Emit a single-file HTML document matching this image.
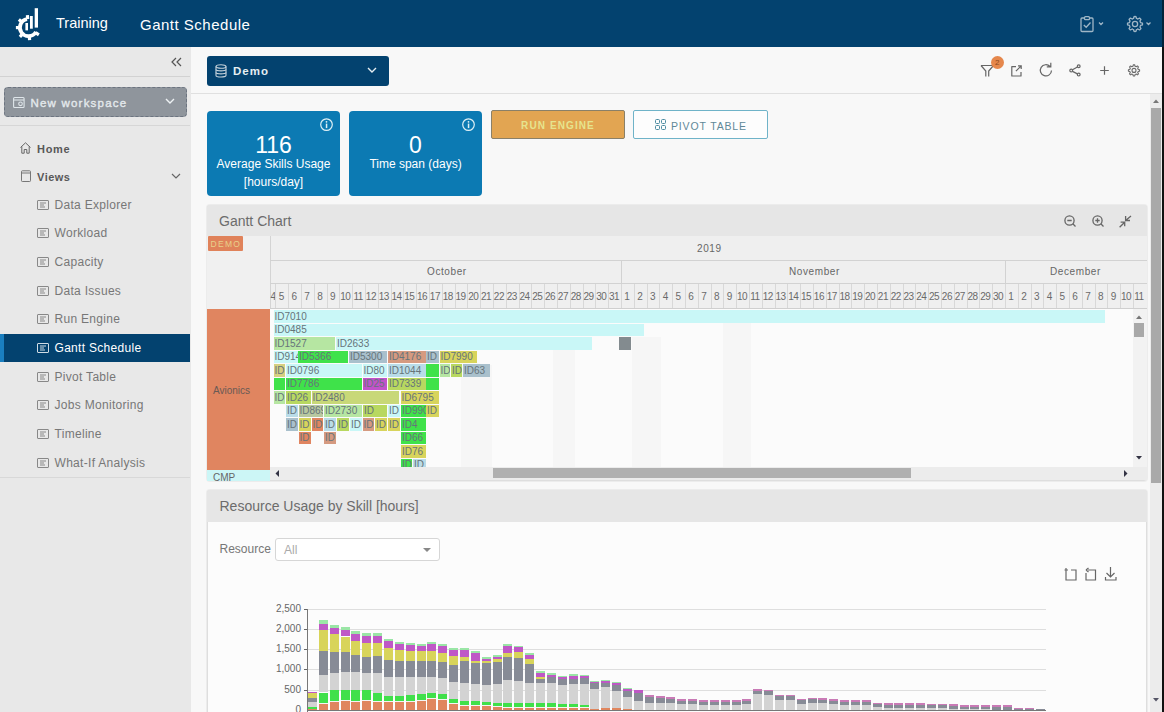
<!DOCTYPE html><html><head><meta charset="utf-8"><style>
*{box-sizing:border-box;margin:0;padding:0}
html,body{width:1164px;height:712px;overflow:hidden;background:#f8f8f8;font-family:"Liberation Sans",sans-serif;position:relative}
.abs{position:absolute}
.t{position:absolute;white-space:nowrap;line-height:1}
svg{position:absolute;overflow:visible}
</style></head><body>

<div class="abs" style="left:0;top:0;width:1164px;height:47px;background:#03426f"></div>
<svg style="left:0;top:0" width="60" height="47" viewBox="0 0 60 47"><path d="M27.01 19.13 A8.6 8.6 0 1 0 35.95 31.90" fill="none" stroke="#fff" stroke-width="3.8"/><rect x="26.90" y="15.00" width="3.2" height="4" fill="#fff" transform="rotate(-5 28.5 27.6)"/><rect x="26.90" y="15.00" width="3.2" height="4" fill="#fff" transform="rotate(-50 28.5 27.6)"/><rect x="26.90" y="15.00" width="3.2" height="4" fill="#fff" transform="rotate(270 28.5 27.6)"/><rect x="26.90" y="15.00" width="3.2" height="4" fill="#fff" transform="rotate(223 28.5 27.6)"/><rect x="26.90" y="15.00" width="3.2" height="4" fill="#fff" transform="rotate(175 28.5 27.6)"/><rect x="26.90" y="15.00" width="3.2" height="4" fill="#fff" transform="rotate(125 28.5 27.6)"/><rect x="25.4" y="23" width="2.6" height="7.4" fill="#fff"/><rect x="30" y="16" width="2.8" height="12.7" fill="#fff"/><rect x="34.7" y="8.2" width="3.3" height="19.4" fill="#fff"/></svg>
<div class="t" style="left:56px;top:16px;font-size:14.5px;color:#fff">Training</div>
<div class="t" style="left:140px;top:16.5px;font-size:15px;letter-spacing:0.5px;color:#fff">Gantt Schedule</div>
<svg style="left:1080px;top:16px" width="80" height="16" viewBox="0 0 80 16">
<g fill="none" stroke="#9fb6c6" stroke-width="1.3">
<rect x="1" y="2" width="12" height="13.5" rx="1"/>
<rect x="4.5" y="0.7" width="5" height="3" rx="1" fill="#03426f"/>
<path d="M3.8 9 L6.2 11.3 L10.5 6.5"/>
<path d="M19 6.5 L21 8.5 L23 6.5"/>
<path d="M66.5 6.5 L68.5 8.5 L70.5 6.5"/>
</g></svg>
<svg style="left:1120px;top:10px" width="40" height="30" viewBox="0 0 40 30"><path d="M22.50 14.00 L22.44 14.98 L20.51 15.48 L20.27 16.18 L19.94 16.85 L20.95 18.57 L20.30 19.30 L19.57 19.95 L17.85 18.94 L17.18 19.27 L16.48 19.51 L15.98 21.44 L15.00 21.50 L14.02 21.44 L13.52 19.51 L12.82 19.27 L12.15 18.94 L10.43 19.95 L9.70 19.30 L9.05 18.57 L10.06 16.85 L9.73 16.18 L9.49 15.48 L7.56 14.98 L7.50 14.00 L7.56 13.02 L9.49 12.52 L9.73 11.82 L10.06 11.15 L9.05 9.43 L9.70 8.70 L10.43 8.05 L12.15 9.06 L12.82 8.73 L13.52 8.49 L14.02 6.56 L15.00 6.50 L15.98 6.56 L16.48 8.49 L17.18 8.73 L17.85 9.06 L19.57 8.05 L20.30 8.70 L20.95 9.43 L19.94 11.15 L20.27 11.82 L20.51 12.52 L22.44 13.02 Z" fill="none" stroke="#9fb6c6" stroke-width="1.3" stroke-linejoin="round"/><circle cx="15" cy="14" r="2.6" fill="none" stroke="#9fb6c6" stroke-width="1.3"/></svg>
<div class="abs" style="left:0;top:47px;width:191px;height:665px;background:#e8e8e8"></div>
<svg style="left:171px;top:57px" width="12" height="10" viewBox="0 0 12 10"><g fill="none" stroke="#555" stroke-width="1.2"><path d="M5 1 L1 5 L5 9"/><path d="M10 1 L6 5 L10 9"/></g></svg>
<div class="abs" style="left:0;top:76px;width:190px;height:1px;background:#d2d2d2"></div>
<div class="abs" style="left:4px;top:87px;width:183px;height:30px;background:#8f959c;border:1px dashed #6c7480;border-radius:4px"></div>
<svg style="left:13px;top:96px" width="12" height="12" viewBox="0 0 12 12"><g fill="none" stroke="#dfe6ea" stroke-width="1.1"><rect x="0.6" y="1.5" width="10.5" height="10" rx="1"/><path d="M0.6 4 H11"/><circle cx="7.5" cy="7.8" r="1.8"/></g></svg>
<div class="t" style="left:30.5px;top:97.8px;font-size:11.5px;color:#e4e9ec;-webkit-text-stroke:0.35px #e4e9ec;letter-spacing:1.2px">New workspace</div>
<svg style="left:165px;top:98px" width="10" height="7" viewBox="0 0 10 7"><path d="M1 1 L5 5 L9 1" fill="none" stroke="#eef2f4" stroke-width="1.4"/></svg>
<div class="abs" style="left:0;top:125px;width:190px;height:1px;background:#d6d6d6"></div>
<svg style="left:20px;top:142px" width="11" height="12" viewBox="0 0 11 12"><g fill="none" stroke="#666" stroke-width="1"><path d="M0.5 5.5 L5.5 0.8 L10.5 5.5"/><path d="M1.8 4.5 V11.2 H4.2 V7.5 H6.8 V11.2 H9.2 V4.5"/></g></svg>
<div class="t" style="left:37px;top:143.5px;font-size:11px;color:#585858;font-weight:bold;letter-spacing:0.7px">Home</div>
<svg style="left:21px;top:170px" width="10" height="12" viewBox="0 0 10 12"><g fill="none" stroke="#777" stroke-width="1"><rect x="0.5" y="0.8" width="9" height="10.7" rx="0.8"/><path d="M0.5 3 H9.5"/></g></svg>
<div class="t" style="left:37px;top:172px;font-size:11px;color:#585858;font-weight:bold;letter-spacing:0.5px">Views</div>
<svg style="left:171px;top:173px" width="10" height="7" viewBox="0 0 10 7"><path d="M1 1 L5 5 L9 1" fill="none" stroke="#666" stroke-width="1.2"/></svg>
<svg style="left:37px;top:199.5px" width="12" height="10" viewBox="0 0 12 10"><g fill="none" stroke="#888" stroke-width="1"><rect x="0.5" y="0.5" width="11" height="9" rx="0.5"/><path d="M3 3 H9 M3 5 H7 M3 7 H8"/></g></svg>
<div class="t" style="left:54.5px;top:198.5px;font-size:12px;letter-spacing:0.3px;color:#777">Data Explorer</div>
<svg style="left:37px;top:228.2px" width="12" height="10" viewBox="0 0 12 10"><g fill="none" stroke="#888" stroke-width="1"><rect x="0.5" y="0.5" width="11" height="9" rx="0.5"/><path d="M3 3 H9 M3 5 H7 M3 7 H8"/></g></svg>
<div class="t" style="left:54.5px;top:227.2px;font-size:12px;letter-spacing:0.3px;color:#777">Workload</div>
<svg style="left:37px;top:256.9px" width="12" height="10" viewBox="0 0 12 10"><g fill="none" stroke="#888" stroke-width="1"><rect x="0.5" y="0.5" width="11" height="9" rx="0.5"/><path d="M3 3 H9 M3 5 H7 M3 7 H8"/></g></svg>
<div class="t" style="left:54.5px;top:255.9px;font-size:12px;letter-spacing:0.3px;color:#777">Capacity</div>
<svg style="left:37px;top:285.6px" width="12" height="10" viewBox="0 0 12 10"><g fill="none" stroke="#888" stroke-width="1"><rect x="0.5" y="0.5" width="11" height="9" rx="0.5"/><path d="M3 3 H9 M3 5 H7 M3 7 H8"/></g></svg>
<div class="t" style="left:54.5px;top:284.6px;font-size:12px;letter-spacing:0.3px;color:#777">Data Issues</div>
<svg style="left:37px;top:314.3px" width="12" height="10" viewBox="0 0 12 10"><g fill="none" stroke="#888" stroke-width="1"><rect x="0.5" y="0.5" width="11" height="9" rx="0.5"/><path d="M3 3 H9 M3 5 H7 M3 7 H8"/></g></svg>
<div class="t" style="left:54.5px;top:313.3px;font-size:12px;letter-spacing:0.3px;color:#777">Run Engine</div>
<div class="abs" style="left:0;top:334px;width:190px;height:28px;background:#03426f"></div>
<div class="abs" style="left:0;top:334px;width:4px;height:28px;background:#1a7fc0"></div>
<svg style="left:37px;top:343.0px" width="12" height="10" viewBox="0 0 12 10"><g fill="none" stroke="#cfdbe4" stroke-width="1"><rect x="0.5" y="0.5" width="11" height="9" rx="0.5"/><path d="M3 3 H9 M3 5 H7 M3 7 H8"/></g></svg>
<div class="t" style="left:54.5px;top:342.0px;font-size:12px;letter-spacing:0.3px;color:#fff">Gantt Schedule</div>
<svg style="left:37px;top:371.7px" width="12" height="10" viewBox="0 0 12 10"><g fill="none" stroke="#888" stroke-width="1"><rect x="0.5" y="0.5" width="11" height="9" rx="0.5"/><path d="M3 3 H9 M3 5 H7 M3 7 H8"/></g></svg>
<div class="t" style="left:54.5px;top:370.7px;font-size:12px;letter-spacing:0.3px;color:#777">Pivot Table</div>
<svg style="left:37px;top:400.4px" width="12" height="10" viewBox="0 0 12 10"><g fill="none" stroke="#888" stroke-width="1"><rect x="0.5" y="0.5" width="11" height="9" rx="0.5"/><path d="M3 3 H9 M3 5 H7 M3 7 H8"/></g></svg>
<div class="t" style="left:54.5px;top:399.4px;font-size:12px;letter-spacing:0.3px;color:#777">Jobs Monitoring</div>
<svg style="left:37px;top:429.1px" width="12" height="10" viewBox="0 0 12 10"><g fill="none" stroke="#888" stroke-width="1"><rect x="0.5" y="0.5" width="11" height="9" rx="0.5"/><path d="M3 3 H9 M3 5 H7 M3 7 H8"/></g></svg>
<div class="t" style="left:54.5px;top:428.1px;font-size:12px;letter-spacing:0.3px;color:#777">Timeline</div>
<svg style="left:37px;top:457.8px" width="12" height="10" viewBox="0 0 12 10"><g fill="none" stroke="#888" stroke-width="1"><rect x="0.5" y="0.5" width="11" height="9" rx="0.5"/><path d="M3 3 H9 M3 5 H7 M3 7 H8"/></g></svg>
<div class="t" style="left:54.5px;top:456.8px;font-size:12px;letter-spacing:0.3px;color:#777">What-If Analysis</div>
<div class="abs" style="left:0;top:477px;width:190px;height:1px;background:#d8d8d8"></div>
<div class="abs" style="left:191px;top:47px;width:971px;height:47px;background:#f8f8f8"></div>
<div class="abs" style="left:191px;top:93px;width:971px;height:1px;background:#e0e0e0"></div>
<div class="abs" style="left:207px;top:56px;width:182px;height:30px;background:#03426f;border-radius:3px"></div>
<svg style="left:215px;top:64px" width="12" height="14" viewBox="0 0 12 14"><g fill="none" stroke="#c8d4dc" stroke-width="1.1"><ellipse cx="6" cy="2.5" rx="5" ry="1.8"/><path d="M1 2.5 V11.5 C1 13.5 11 13.5 11 11.5 V2.5"/><path d="M1 5.5 C1 7.3 11 7.3 11 5.5 M1 8.5 C1 10.3 11 10.3 11 8.5"/></g></svg>
<div class="t" style="left:233px;top:66px;font-size:11.5px;color:#e6eef2;font-weight:bold;letter-spacing:1px">Demo</div>
<svg style="left:367px;top:67px" width="10" height="7" viewBox="0 0 10 7"><path d="M1 1 L5 5 L9 1" fill="none" stroke="#e6eef2" stroke-width="1.4"/></svg>
<svg style="left:975px;top:52px" width="175" height="30" viewBox="0 0 175 30"><g fill="none" stroke="#666" stroke-width="1.2">
<path d="M6 13.5 H18.5 L13.7 19 V24.5 M10.8 24.5 V19 L6 13.5"/>
<path d="M41 14.6 H36.8 V24 H46 V20" stroke-linejoin="round"/><path d="M40.9 19.2 L46.2 13.8 M43 13.8 H46.2 V17"/>
<path d="M75 14.5 A5.6 5.6 0 1 0 76.5 18.5 M75.8 10.8 V14.8 H71.8"/>
<circle cx="96.2" cy="18.6" r="1.4"/><circle cx="103.7" cy="14.3" r="1.4"/><circle cx="103.7" cy="22.6" r="1.4"/><path d="M97.5 17.8 L102.4 15 M97.5 19.4 L102.4 21.9"/>
<path d="M129.5 14.2 V22.8 M125.2 18.5 H133.8"/>
</g></svg>
<svg style="left:1120px;top:52px" width="30" height="30" viewBox="0 0 30 30"><path d="M19.60 18.40 L19.55 19.13 L18.11 19.50 L17.93 20.03 L17.69 20.53 L18.44 21.81 L17.96 22.36 L17.41 22.84 L16.13 22.09 L15.63 22.33 L15.10 22.51 L14.73 23.95 L14.00 24.00 L13.27 23.95 L12.90 22.51 L12.37 22.33 L11.87 22.09 L10.59 22.84 L10.04 22.36 L9.56 21.81 L10.31 20.53 L10.07 20.03 L9.89 19.50 L8.45 19.13 L8.40 18.40 L8.45 17.67 L9.89 17.30 L10.07 16.77 L10.31 16.27 L9.56 14.99 L10.04 14.44 L10.59 13.96 L11.87 14.71 L12.37 14.47 L12.90 14.29 L13.27 12.85 L14.00 12.80 L14.73 12.85 L15.10 14.29 L15.63 14.47 L16.13 14.71 L17.41 13.96 L17.96 14.44 L18.44 14.99 L17.69 16.27 L17.93 16.77 L18.11 17.30 L19.55 17.67 Z" fill="none" stroke="#6a6a6a" stroke-width="1.1" stroke-linejoin="round"/><circle cx="14" cy="18.4" r="2" fill="none" stroke="#6a6a6a" stroke-width="1.1"/></svg>
<div class="abs" style="left:991px;top:56px;width:13px;height:13px;border-radius:50%;background:#e5874c"></div>
<div class="t" style="left:995px;top:58.5px;font-size:8px;color:#8a4a20">2</div>
<div class="abs" style="left:1150px;top:94px;width:12px;height:618px;background:#ececec"></div>
<div class="abs" style="left:1151px;top:108px;width:10px;height:375px;background:#a9a9a9"></div>
<svg style="left:1152px;top:98px" width="8" height="6" viewBox="0 0 8 6"><path d="M1 5 L4 1.5 L7 5 Z" fill="#777"/></svg>
<svg style="left:1152px;top:697px" width="8" height="6" viewBox="0 0 8 6"><path d="M1 1 L4 4.5 L7 1 Z" fill="#556"/></svg>
<div class="abs" style="left:1162px;top:0;width:2px;height:47px;background:#02233a"></div>
<div class="abs" style="left:1162px;top:47px;width:2px;height:665px;background:#111"></div>
<div class="abs" style="left:207px;top:111px;width:133px;height:85px;background:#0c7ab3;border-radius:4px"></div>
<div class="t" style="left:207px;width:133px;text-align:center;top:134px;font-size:23px;color:#fff">116</div>
<div class="t" style="left:207px;width:133px;text-align:center;top:158px;font-size:12px;color:#fff">Average Skills Usage</div>
<div class="t" style="left:207px;width:133px;text-align:center;top:176px;font-size:12px;color:#fff">[hours/day]</div>
<svg style="left:320px;top:118px" width="14" height="14" viewBox="0 0 14 14"><circle cx="6.5" cy="6.6" r="5.8" fill="none" stroke="#dff0f5" stroke-width="1.2"/><rect x="5.8" y="5.6" width="1.5" height="4.5" fill="#dff0f5"/><circle cx="6.5" cy="3.8" r="0.9" fill="#dff0f5"/></svg>
<div class="abs" style="left:349px;top:111px;width:133px;height:85px;background:#0c7ab3;border-radius:4px"></div>
<div class="t" style="left:349px;width:133px;text-align:center;top:134px;font-size:23px;color:#fff">0</div>
<div class="t" style="left:349px;width:133px;text-align:center;top:158px;font-size:12px;color:#fff">Time span (days)</div>
<svg style="left:462px;top:118px" width="14" height="14" viewBox="0 0 14 14"><circle cx="6.5" cy="6.6" r="5.8" fill="none" stroke="#dff0f5" stroke-width="1.2"/><rect x="5.8" y="5.6" width="1.5" height="4.5" fill="#dff0f5"/><circle cx="6.5" cy="3.8" r="0.9" fill="#dff0f5"/></svg>
<div class="abs" style="left:491px;top:110px;width:134px;height:29px;background:#e2a552;border:1px solid #8a8068;border-radius:2px"></div>
<div class="t" style="left:491px;width:134px;text-align:center;top:120.5px;font-size:10px;font-weight:bold;color:#e6e48e;letter-spacing:1.1px">RUN ENGINE</div>
<div class="abs" style="left:633px;top:110px;width:135px;height:29px;background:#fdfdfd;border:1px solid #6fb3c8;border-radius:2px"></div>
<svg style="left:655px;top:119px" width="11" height="11" viewBox="0 0 11 11"><g fill="none" stroke="#4a8aa0" stroke-width="1"><rect x="0.5" y="0.5" width="4" height="4" rx="1"/><rect x="6.5" y="0.5" width="4" height="4" rx="1"/><rect x="0.5" y="6.5" width="4" height="4" rx="1"/><rect x="6.5" y="6.5" width="4" height="4" rx="1"/></g></svg>
<div class="t" style="left:671px;top:120.5px;font-size:10.5px;color:#5f8898;letter-spacing:0.85px">PIVOT TABLE</div>
<div class="abs" style="left:207px;top:205px;width:940px;height:276px;background:#f9f9f9;border:1px solid #dedede;box-shadow:0 0 0 1px #ececec;border-radius:3px"></div>
<div class="abs" style="left:207px;top:205px;width:940px;height:31px;background:#e6e6e6;border-radius:3px 3px 0 0"></div>
<div class="t" style="left:219px;top:213.5px;font-size:14px;color:#6c6c6c">Gantt Chart</div>
<svg style="left:1060px;top:210px" width="80" height="22" viewBox="0 0 80 22"><g fill="none" stroke="#666" stroke-width="1.3">
<circle cx="9.5" cy="10.5" r="4.6"/><path d="M12.8 13.8 L15.5 16.5 M7.3 10.5 H11.7"/>
<circle cx="37.5" cy="10.5" r="4.6"/><path d="M40.8 13.8 L43.5 16.5 M35.3 10.5 H39.7 M37.5 8.3 V12.7"/>
<path d="M59.6 17.3 L64.7 12.2 M60.6 12.2 H64.7 V16.3 M71 6 L65.6 10.5 M65.6 5.9 V10.5 H70"/>
</g></svg>
<div class="abs" style="left:207px;top:236px;width:63px;height:73px;background:#f0f0f0"></div>
<div class="abs" style="left:208px;top:236px;width:35px;height:15px;background:#e0825a;border-radius:1px"></div>
<div class="t" style="left:210.5px;top:239.5px;font-size:8.5px;letter-spacing:1.3px;color:#e8d08a">DEMO</div>
<div class="abs" style="left:270px;top:236px;width:877px;height:73px;background:#efefef;border-left:1px solid #d4d4d4"></div>
<div class="abs" style="left:270px;top:260px;width:877px;height:1px;background:#d2d2d2"></div>
<div class="abs" style="left:270px;top:283px;width:877px;height:1px;background:#d2d2d2"></div>
<div class="abs" style="left:270px;top:308px;width:877px;height:1px;background:#cfcfcf"></div>
<div class="t" style="left:697px;top:243.5px;font-size:10px;letter-spacing:0.6px;color:#666">2019</div>
<div class="abs" style="left:620.5px;top:261px;width:1px;height:23px;background:#d2d2d2"></div>
<div class="abs" style="left:1004.5px;top:261px;width:1px;height:23px;background:#d2d2d2"></div>
<div class="t" style="left:427px;top:267px;font-size:10px;letter-spacing:0.6px;color:#666">October</div>
<div class="t" style="left:789px;top:267px;font-size:10px;letter-spacing:0.6px;color:#666">November</div>
<div class="t" style="left:1050px;top:267px;font-size:10px;letter-spacing:0.6px;color:#666">December</div>
<div class="abs" style="left:270px;top:284px;width:877px;height:24px;overflow:hidden">
<div class="abs" style="left:-7.40px;top:0;width:1px;height:24px;background:#d8d8d8"></div>
<div class="t" style="left:-3.30px;width:12.8px;text-align:center;top:8.2px;font-size:10px;letter-spacing:-0.5px;color:#6a6a6a">4</div>
<div class="abs" style="left:5.40px;top:0;width:1px;height:24px;background:#d8d8d8"></div>
<div class="t" style="left:4.90px;width:12.8px;text-align:center;top:8.2px;font-size:10px;letter-spacing:-0.5px;color:#6a6a6a">5</div>
<div class="abs" style="left:18.20px;top:0;width:1px;height:24px;background:#d8d8d8"></div>
<div class="t" style="left:17.70px;width:12.8px;text-align:center;top:8.2px;font-size:10px;letter-spacing:-0.5px;color:#6a6a6a">6</div>
<div class="abs" style="left:31.00px;top:0;width:1px;height:24px;background:#d8d8d8"></div>
<div class="t" style="left:30.50px;width:12.8px;text-align:center;top:8.2px;font-size:10px;letter-spacing:-0.5px;color:#6a6a6a">7</div>
<div class="abs" style="left:43.80px;top:0;width:1px;height:24px;background:#d8d8d8"></div>
<div class="t" style="left:43.30px;width:12.8px;text-align:center;top:8.2px;font-size:10px;letter-spacing:-0.5px;color:#6a6a6a">8</div>
<div class="abs" style="left:56.60px;top:0;width:1px;height:24px;background:#d8d8d8"></div>
<div class="t" style="left:56.10px;width:12.8px;text-align:center;top:8.2px;font-size:10px;letter-spacing:-0.5px;color:#6a6a6a">9</div>
<div class="abs" style="left:69.40px;top:0;width:1px;height:24px;background:#d8d8d8"></div>
<div class="t" style="left:68.90px;width:12.8px;text-align:center;top:8.2px;font-size:10px;letter-spacing:-0.5px;color:#6a6a6a">10</div>
<div class="abs" style="left:82.20px;top:0;width:1px;height:24px;background:#d8d8d8"></div>
<div class="t" style="left:81.70px;width:12.8px;text-align:center;top:8.2px;font-size:10px;letter-spacing:-0.5px;color:#6a6a6a">11</div>
<div class="abs" style="left:95.00px;top:0;width:1px;height:24px;background:#d8d8d8"></div>
<div class="t" style="left:94.50px;width:12.8px;text-align:center;top:8.2px;font-size:10px;letter-spacing:-0.5px;color:#6a6a6a">12</div>
<div class="abs" style="left:107.80px;top:0;width:1px;height:24px;background:#d8d8d8"></div>
<div class="t" style="left:107.30px;width:12.8px;text-align:center;top:8.2px;font-size:10px;letter-spacing:-0.5px;color:#6a6a6a">13</div>
<div class="abs" style="left:120.60px;top:0;width:1px;height:24px;background:#d8d8d8"></div>
<div class="t" style="left:120.10px;width:12.8px;text-align:center;top:8.2px;font-size:10px;letter-spacing:-0.5px;color:#6a6a6a">14</div>
<div class="abs" style="left:133.40px;top:0;width:1px;height:24px;background:#d8d8d8"></div>
<div class="t" style="left:132.90px;width:12.8px;text-align:center;top:8.2px;font-size:10px;letter-spacing:-0.5px;color:#6a6a6a">15</div>
<div class="abs" style="left:146.20px;top:0;width:1px;height:24px;background:#d8d8d8"></div>
<div class="t" style="left:145.70px;width:12.8px;text-align:center;top:8.2px;font-size:10px;letter-spacing:-0.5px;color:#6a6a6a">16</div>
<div class="abs" style="left:159.00px;top:0;width:1px;height:24px;background:#d8d8d8"></div>
<div class="t" style="left:158.50px;width:12.8px;text-align:center;top:8.2px;font-size:10px;letter-spacing:-0.5px;color:#6a6a6a">17</div>
<div class="abs" style="left:171.80px;top:0;width:1px;height:24px;background:#d8d8d8"></div>
<div class="t" style="left:171.30px;width:12.8px;text-align:center;top:8.2px;font-size:10px;letter-spacing:-0.5px;color:#6a6a6a">18</div>
<div class="abs" style="left:184.60px;top:0;width:1px;height:24px;background:#d8d8d8"></div>
<div class="t" style="left:184.10px;width:12.8px;text-align:center;top:8.2px;font-size:10px;letter-spacing:-0.5px;color:#6a6a6a">19</div>
<div class="abs" style="left:197.40px;top:0;width:1px;height:24px;background:#d8d8d8"></div>
<div class="t" style="left:196.90px;width:12.8px;text-align:center;top:8.2px;font-size:10px;letter-spacing:-0.5px;color:#6a6a6a">20</div>
<div class="abs" style="left:210.20px;top:0;width:1px;height:24px;background:#d8d8d8"></div>
<div class="t" style="left:209.70px;width:12.8px;text-align:center;top:8.2px;font-size:10px;letter-spacing:-0.5px;color:#6a6a6a">21</div>
<div class="abs" style="left:223.00px;top:0;width:1px;height:24px;background:#d8d8d8"></div>
<div class="t" style="left:222.50px;width:12.8px;text-align:center;top:8.2px;font-size:10px;letter-spacing:-0.5px;color:#6a6a6a">22</div>
<div class="abs" style="left:235.80px;top:0;width:1px;height:24px;background:#d8d8d8"></div>
<div class="t" style="left:235.30px;width:12.8px;text-align:center;top:8.2px;font-size:10px;letter-spacing:-0.5px;color:#6a6a6a">23</div>
<div class="abs" style="left:248.60px;top:0;width:1px;height:24px;background:#d8d8d8"></div>
<div class="t" style="left:248.10px;width:12.8px;text-align:center;top:8.2px;font-size:10px;letter-spacing:-0.5px;color:#6a6a6a">24</div>
<div class="abs" style="left:261.40px;top:0;width:1px;height:24px;background:#d8d8d8"></div>
<div class="t" style="left:260.90px;width:12.8px;text-align:center;top:8.2px;font-size:10px;letter-spacing:-0.5px;color:#6a6a6a">25</div>
<div class="abs" style="left:274.20px;top:0;width:1px;height:24px;background:#d8d8d8"></div>
<div class="t" style="left:273.70px;width:12.8px;text-align:center;top:8.2px;font-size:10px;letter-spacing:-0.5px;color:#6a6a6a">26</div>
<div class="abs" style="left:287.00px;top:0;width:1px;height:24px;background:#d8d8d8"></div>
<div class="t" style="left:286.50px;width:12.8px;text-align:center;top:8.2px;font-size:10px;letter-spacing:-0.5px;color:#6a6a6a">27</div>
<div class="abs" style="left:299.80px;top:0;width:1px;height:24px;background:#d8d8d8"></div>
<div class="t" style="left:299.30px;width:12.8px;text-align:center;top:8.2px;font-size:10px;letter-spacing:-0.5px;color:#6a6a6a">28</div>
<div class="abs" style="left:312.60px;top:0;width:1px;height:24px;background:#d8d8d8"></div>
<div class="t" style="left:312.10px;width:12.8px;text-align:center;top:8.2px;font-size:10px;letter-spacing:-0.5px;color:#6a6a6a">29</div>
<div class="abs" style="left:325.40px;top:0;width:1px;height:24px;background:#d8d8d8"></div>
<div class="t" style="left:324.90px;width:12.8px;text-align:center;top:8.2px;font-size:10px;letter-spacing:-0.5px;color:#6a6a6a">30</div>
<div class="abs" style="left:338.20px;top:0;width:1px;height:24px;background:#d8d8d8"></div>
<div class="t" style="left:337.70px;width:12.8px;text-align:center;top:8.2px;font-size:10px;letter-spacing:-0.5px;color:#6a6a6a">31</div>
<div class="abs" style="left:351.00px;top:0;width:1px;height:24px;background:#d8d8d8"></div>
<div class="t" style="left:350.50px;width:12.8px;text-align:center;top:8.2px;font-size:10px;letter-spacing:-0.5px;color:#6a6a6a">1</div>
<div class="abs" style="left:363.80px;top:0;width:1px;height:24px;background:#d8d8d8"></div>
<div class="t" style="left:363.30px;width:12.8px;text-align:center;top:8.2px;font-size:10px;letter-spacing:-0.5px;color:#6a6a6a">2</div>
<div class="abs" style="left:376.60px;top:0;width:1px;height:24px;background:#d8d8d8"></div>
<div class="t" style="left:376.10px;width:12.8px;text-align:center;top:8.2px;font-size:10px;letter-spacing:-0.5px;color:#6a6a6a">3</div>
<div class="abs" style="left:389.40px;top:0;width:1px;height:24px;background:#d8d8d8"></div>
<div class="t" style="left:388.90px;width:12.8px;text-align:center;top:8.2px;font-size:10px;letter-spacing:-0.5px;color:#6a6a6a">4</div>
<div class="abs" style="left:402.20px;top:0;width:1px;height:24px;background:#d8d8d8"></div>
<div class="t" style="left:401.70px;width:12.8px;text-align:center;top:8.2px;font-size:10px;letter-spacing:-0.5px;color:#6a6a6a">5</div>
<div class="abs" style="left:415.00px;top:0;width:1px;height:24px;background:#d8d8d8"></div>
<div class="t" style="left:414.50px;width:12.8px;text-align:center;top:8.2px;font-size:10px;letter-spacing:-0.5px;color:#6a6a6a">6</div>
<div class="abs" style="left:427.80px;top:0;width:1px;height:24px;background:#d8d8d8"></div>
<div class="t" style="left:427.30px;width:12.8px;text-align:center;top:8.2px;font-size:10px;letter-spacing:-0.5px;color:#6a6a6a">7</div>
<div class="abs" style="left:440.60px;top:0;width:1px;height:24px;background:#d8d8d8"></div>
<div class="t" style="left:440.10px;width:12.8px;text-align:center;top:8.2px;font-size:10px;letter-spacing:-0.5px;color:#6a6a6a">8</div>
<div class="abs" style="left:453.40px;top:0;width:1px;height:24px;background:#d8d8d8"></div>
<div class="t" style="left:452.90px;width:12.8px;text-align:center;top:8.2px;font-size:10px;letter-spacing:-0.5px;color:#6a6a6a">9</div>
<div class="abs" style="left:466.20px;top:0;width:1px;height:24px;background:#d8d8d8"></div>
<div class="t" style="left:465.70px;width:12.8px;text-align:center;top:8.2px;font-size:10px;letter-spacing:-0.5px;color:#6a6a6a">10</div>
<div class="abs" style="left:479.00px;top:0;width:1px;height:24px;background:#d8d8d8"></div>
<div class="t" style="left:478.50px;width:12.8px;text-align:center;top:8.2px;font-size:10px;letter-spacing:-0.5px;color:#6a6a6a">11</div>
<div class="abs" style="left:491.80px;top:0;width:1px;height:24px;background:#d8d8d8"></div>
<div class="t" style="left:491.30px;width:12.8px;text-align:center;top:8.2px;font-size:10px;letter-spacing:-0.5px;color:#6a6a6a">12</div>
<div class="abs" style="left:504.60px;top:0;width:1px;height:24px;background:#d8d8d8"></div>
<div class="t" style="left:504.10px;width:12.8px;text-align:center;top:8.2px;font-size:10px;letter-spacing:-0.5px;color:#6a6a6a">13</div>
<div class="abs" style="left:517.40px;top:0;width:1px;height:24px;background:#d8d8d8"></div>
<div class="t" style="left:516.90px;width:12.8px;text-align:center;top:8.2px;font-size:10px;letter-spacing:-0.5px;color:#6a6a6a">14</div>
<div class="abs" style="left:530.20px;top:0;width:1px;height:24px;background:#d8d8d8"></div>
<div class="t" style="left:529.70px;width:12.8px;text-align:center;top:8.2px;font-size:10px;letter-spacing:-0.5px;color:#6a6a6a">15</div>
<div class="abs" style="left:543.00px;top:0;width:1px;height:24px;background:#d8d8d8"></div>
<div class="t" style="left:542.50px;width:12.8px;text-align:center;top:8.2px;font-size:10px;letter-spacing:-0.5px;color:#6a6a6a">16</div>
<div class="abs" style="left:555.80px;top:0;width:1px;height:24px;background:#d8d8d8"></div>
<div class="t" style="left:555.30px;width:12.8px;text-align:center;top:8.2px;font-size:10px;letter-spacing:-0.5px;color:#6a6a6a">17</div>
<div class="abs" style="left:568.60px;top:0;width:1px;height:24px;background:#d8d8d8"></div>
<div class="t" style="left:568.10px;width:12.8px;text-align:center;top:8.2px;font-size:10px;letter-spacing:-0.5px;color:#6a6a6a">18</div>
<div class="abs" style="left:581.40px;top:0;width:1px;height:24px;background:#d8d8d8"></div>
<div class="t" style="left:580.90px;width:12.8px;text-align:center;top:8.2px;font-size:10px;letter-spacing:-0.5px;color:#6a6a6a">19</div>
<div class="abs" style="left:594.20px;top:0;width:1px;height:24px;background:#d8d8d8"></div>
<div class="t" style="left:593.70px;width:12.8px;text-align:center;top:8.2px;font-size:10px;letter-spacing:-0.5px;color:#6a6a6a">20</div>
<div class="abs" style="left:607.00px;top:0;width:1px;height:24px;background:#d8d8d8"></div>
<div class="t" style="left:606.50px;width:12.8px;text-align:center;top:8.2px;font-size:10px;letter-spacing:-0.5px;color:#6a6a6a">21</div>
<div class="abs" style="left:619.80px;top:0;width:1px;height:24px;background:#d8d8d8"></div>
<div class="t" style="left:619.30px;width:12.8px;text-align:center;top:8.2px;font-size:10px;letter-spacing:-0.5px;color:#6a6a6a">22</div>
<div class="abs" style="left:632.60px;top:0;width:1px;height:24px;background:#d8d8d8"></div>
<div class="t" style="left:632.10px;width:12.8px;text-align:center;top:8.2px;font-size:10px;letter-spacing:-0.5px;color:#6a6a6a">23</div>
<div class="abs" style="left:645.40px;top:0;width:1px;height:24px;background:#d8d8d8"></div>
<div class="t" style="left:644.90px;width:12.8px;text-align:center;top:8.2px;font-size:10px;letter-spacing:-0.5px;color:#6a6a6a">24</div>
<div class="abs" style="left:658.20px;top:0;width:1px;height:24px;background:#d8d8d8"></div>
<div class="t" style="left:657.70px;width:12.8px;text-align:center;top:8.2px;font-size:10px;letter-spacing:-0.5px;color:#6a6a6a">25</div>
<div class="abs" style="left:671.00px;top:0;width:1px;height:24px;background:#d8d8d8"></div>
<div class="t" style="left:670.50px;width:12.8px;text-align:center;top:8.2px;font-size:10px;letter-spacing:-0.5px;color:#6a6a6a">26</div>
<div class="abs" style="left:683.80px;top:0;width:1px;height:24px;background:#d8d8d8"></div>
<div class="t" style="left:683.30px;width:12.8px;text-align:center;top:8.2px;font-size:10px;letter-spacing:-0.5px;color:#6a6a6a">27</div>
<div class="abs" style="left:696.60px;top:0;width:1px;height:24px;background:#d8d8d8"></div>
<div class="t" style="left:696.10px;width:12.8px;text-align:center;top:8.2px;font-size:10px;letter-spacing:-0.5px;color:#6a6a6a">28</div>
<div class="abs" style="left:709.40px;top:0;width:1px;height:24px;background:#d8d8d8"></div>
<div class="t" style="left:708.90px;width:12.8px;text-align:center;top:8.2px;font-size:10px;letter-spacing:-0.5px;color:#6a6a6a">29</div>
<div class="abs" style="left:722.20px;top:0;width:1px;height:24px;background:#d8d8d8"></div>
<div class="t" style="left:721.70px;width:12.8px;text-align:center;top:8.2px;font-size:10px;letter-spacing:-0.5px;color:#6a6a6a">30</div>
<div class="abs" style="left:735.00px;top:0;width:1px;height:24px;background:#d8d8d8"></div>
<div class="t" style="left:734.50px;width:12.8px;text-align:center;top:8.2px;font-size:10px;letter-spacing:-0.5px;color:#6a6a6a">1</div>
<div class="abs" style="left:747.80px;top:0;width:1px;height:24px;background:#d8d8d8"></div>
<div class="t" style="left:747.30px;width:12.8px;text-align:center;top:8.2px;font-size:10px;letter-spacing:-0.5px;color:#6a6a6a">2</div>
<div class="abs" style="left:760.60px;top:0;width:1px;height:24px;background:#d8d8d8"></div>
<div class="t" style="left:760.10px;width:12.8px;text-align:center;top:8.2px;font-size:10px;letter-spacing:-0.5px;color:#6a6a6a">3</div>
<div class="abs" style="left:773.40px;top:0;width:1px;height:24px;background:#d8d8d8"></div>
<div class="t" style="left:772.90px;width:12.8px;text-align:center;top:8.2px;font-size:10px;letter-spacing:-0.5px;color:#6a6a6a">4</div>
<div class="abs" style="left:786.20px;top:0;width:1px;height:24px;background:#d8d8d8"></div>
<div class="t" style="left:785.70px;width:12.8px;text-align:center;top:8.2px;font-size:10px;letter-spacing:-0.5px;color:#6a6a6a">5</div>
<div class="abs" style="left:799.00px;top:0;width:1px;height:24px;background:#d8d8d8"></div>
<div class="t" style="left:798.50px;width:12.8px;text-align:center;top:8.2px;font-size:10px;letter-spacing:-0.5px;color:#6a6a6a">6</div>
<div class="abs" style="left:811.80px;top:0;width:1px;height:24px;background:#d8d8d8"></div>
<div class="t" style="left:811.30px;width:12.8px;text-align:center;top:8.2px;font-size:10px;letter-spacing:-0.5px;color:#6a6a6a">7</div>
<div class="abs" style="left:824.60px;top:0;width:1px;height:24px;background:#d8d8d8"></div>
<div class="t" style="left:824.10px;width:12.8px;text-align:center;top:8.2px;font-size:10px;letter-spacing:-0.5px;color:#6a6a6a">8</div>
<div class="abs" style="left:837.40px;top:0;width:1px;height:24px;background:#d8d8d8"></div>
<div class="t" style="left:836.90px;width:12.8px;text-align:center;top:8.2px;font-size:10px;letter-spacing:-0.5px;color:#6a6a6a">9</div>
<div class="abs" style="left:850.20px;top:0;width:1px;height:24px;background:#d8d8d8"></div>
<div class="t" style="left:849.70px;width:12.8px;text-align:center;top:8.2px;font-size:10px;letter-spacing:-0.5px;color:#6a6a6a">10</div>
<div class="abs" style="left:863.00px;top:0;width:1px;height:24px;background:#d8d8d8"></div>
<div class="t" style="left:862.50px;width:12.8px;text-align:center;top:8.2px;font-size:10px;letter-spacing:-0.5px;color:#6a6a6a">11</div>
</div>
<div class="abs" style="left:207px;top:309px;width:63px;height:161px;background:#e08560"></div>
<div class="t" style="left:213px;top:385.5px;font-size:10px;color:#6a5a55">Avionics</div>
<div class="abs" style="left:207px;top:470px;width:63px;height:11px;background:#ccf6f6;overflow:hidden"><div class="t" style="left:6px;top:3px;font-size:10px;color:#666">CMP</div></div>
<div class="abs" style="left:270px;top:309px;width:863px;height:158px;background:#fbfbfb"></div>
<div class="abs" style="left:461px;top:365px;width:31px;height:102px;background:#f6f6f6"></div>
<div class="abs" style="left:553px;top:350px;width:22px;height:117px;background:#f6f6f6"></div>
<div class="abs" style="left:632px;top:337px;width:29px;height:130px;background:#f6f6f6"></div>
<div class="abs" style="left:723px;top:322px;width:28px;height:145px;background:#f6f6f6"></div>
<div class="abs" style="left:270px;top:309px;width:863px;height:158px;overflow:hidden">
<div class="abs" style="left:3.5px;top:1.0px;width:831.5px;height:12.5px;background:#c9f7f7;overflow:hidden"><div class="t" style="left:1px;top:1.5px;font-size:10px;color:#66747a">ID7010</div></div>
<div class="abs" style="left:3.5px;top:14.5px;width:370.0px;height:12.5px;background:#c9f7f7;overflow:hidden"><div class="t" style="left:1px;top:1.5px;font-size:10px;color:#66747a">ID0485</div></div>
<div class="abs" style="left:3.5px;top:28.0px;width:61.5px;height:12.5px;background:#b6e6a2;overflow:hidden"><div class="t" style="left:1px;top:1.5px;font-size:10px;color:#66747a">ID1527</div></div>
<div class="abs" style="left:66.0px;top:28.0px;width:256.0px;height:12.5px;background:#c9f7f7;overflow:hidden"><div class="t" style="left:1px;top:1.5px;font-size:10px;color:#66747a">ID2633</div></div>
<div class="abs" style="left:349.0px;top:28.0px;width:12.0px;height:12.5px;background:#838b8f;overflow:hidden"><div class="t" style="left:1px;top:1.5px;font-size:10px;color:#66747a"></div></div>
<div class="abs" style="left:3.5px;top:41.5px;width:24.5px;height:12.5px;background:#c9f7f7;overflow:hidden"><div class="t" style="left:1px;top:1.5px;font-size:10px;color:#66747a">ID914</div></div>
<div class="abs" style="left:28.0px;top:41.5px;width:50.0px;height:12.5px;background:#3fe24a;overflow:hidden"><div class="t" style="left:1px;top:1.5px;font-size:10px;color:#66747a">ID5366</div></div>
<div class="abs" style="left:79.0px;top:41.5px;width:38.0px;height:12.5px;background:#a9c0cc;overflow:hidden"><div class="t" style="left:1px;top:1.5px;font-size:10px;color:#66747a">ID5300</div></div>
<div class="abs" style="left:118.0px;top:41.5px;width:37.5px;height:12.5px;background:#d59a80;overflow:hidden"><div class="t" style="left:1px;top:1.5px;font-size:10px;color:#66747a">ID4176</div></div>
<div class="abs" style="left:156.0px;top:41.5px;width:12.5px;height:12.5px;background:#a9c0cc;overflow:hidden"><div class="t" style="left:1px;top:1.5px;font-size:10px;color:#66747a">ID</div></div>
<div class="abs" style="left:169.5px;top:41.5px;width:37.5px;height:12.5px;background:#d8d45c;overflow:hidden"><div class="t" style="left:1px;top:1.5px;font-size:10px;color:#66747a">ID7990</div></div>
<div class="abs" style="left:3.5px;top:55.0px;width:11.5px;height:12.5px;background:#d6d080;overflow:hidden"><div class="t" style="left:1px;top:1.5px;font-size:10px;color:#66747a">ID</div></div>
<div class="abs" style="left:16.0px;top:55.0px;width:75.5px;height:12.5px;background:#c9f7f7;overflow:hidden"><div class="t" style="left:1px;top:1.5px;font-size:10px;color:#66747a">ID0796</div></div>
<div class="abs" style="left:92.5px;top:55.0px;width:24.5px;height:12.5px;background:#c9f7f7;overflow:hidden"><div class="t" style="left:1px;top:1.5px;font-size:10px;color:#66747a">ID80</div></div>
<div class="abs" style="left:118.0px;top:55.0px;width:37.5px;height:12.5px;background:#b9dce8;overflow:hidden"><div class="t" style="left:1px;top:1.5px;font-size:10px;color:#66747a">ID1044</div></div>
<div class="abs" style="left:156.0px;top:55.0px;width:12.5px;height:12.5px;background:#3fe24a;overflow:hidden"><div class="t" style="left:1px;top:1.5px;font-size:10px;color:#66747a"></div></div>
<div class="abs" style="left:169.5px;top:55.0px;width:10.5px;height:12.5px;background:#b6e6a2;overflow:hidden"><div class="t" style="left:1px;top:1.5px;font-size:10px;color:#66747a">ID</div></div>
<div class="abs" style="left:181.0px;top:55.0px;width:11.0px;height:12.5px;background:#b8d860;overflow:hidden"><div class="t" style="left:1px;top:1.5px;font-size:10px;color:#66747a">ID</div></div>
<div class="abs" style="left:193.0px;top:55.0px;width:26.5px;height:12.5px;background:#a9c0cc;overflow:hidden"><div class="t" style="left:1px;top:1.5px;font-size:10px;color:#66747a">ID63</div></div>
<div class="abs" style="left:3.5px;top:68.5px;width:11.5px;height:12.5px;background:#3fe24a;overflow:hidden"><div class="t" style="left:1px;top:1.5px;font-size:10px;color:#66747a"></div></div>
<div class="abs" style="left:16.0px;top:68.5px;width:75.5px;height:12.5px;background:#3fe24a;overflow:hidden"><div class="t" style="left:1px;top:1.5px;font-size:10px;color:#66747a">ID7786</div></div>
<div class="abs" style="left:92.5px;top:68.5px;width:24.5px;height:12.5px;background:#c153c9;overflow:hidden"><div class="t" style="left:1px;top:1.5px;font-size:10px;color:#66747a">ID25</div></div>
<div class="abs" style="left:118.0px;top:68.5px;width:37.5px;height:12.5px;background:#b8d860;overflow:hidden"><div class="t" style="left:1px;top:1.5px;font-size:10px;color:#66747a">ID7339</div></div>
<div class="abs" style="left:156.0px;top:68.5px;width:12.5px;height:12.5px;background:#3fe24a;overflow:hidden"><div class="t" style="left:1px;top:1.5px;font-size:10px;color:#66747a"></div></div>
<div class="abs" style="left:3.5px;top:82.0px;width:11.5px;height:12.5px;background:#b6e6a2;overflow:hidden"><div class="t" style="left:1px;top:1.5px;font-size:10px;color:#66747a">ID</div></div>
<div class="abs" style="left:16.0px;top:82.0px;width:24.5px;height:12.5px;background:#b8d860;overflow:hidden"><div class="t" style="left:1px;top:1.5px;font-size:10px;color:#66747a">ID26</div></div>
<div class="abs" style="left:41.5px;top:82.0px;width:87.5px;height:12.5px;background:#c8d878;overflow:hidden"><div class="t" style="left:1px;top:1.5px;font-size:10px;color:#66747a">ID2480</div></div>
<div class="abs" style="left:130.5px;top:82.0px;width:38.0px;height:12.5px;background:#d8d45c;overflow:hidden"><div class="t" style="left:1px;top:1.5px;font-size:10px;color:#66747a">ID6795</div></div>
<div class="abs" style="left:16.0px;top:95.5px;width:11.5px;height:12.5px;background:#b9dce8;overflow:hidden"><div class="t" style="left:1px;top:1.5px;font-size:10px;color:#66747a">ID</div></div>
<div class="abs" style="left:28.5px;top:95.5px;width:24.5px;height:12.5px;background:#b8c8a0;overflow:hidden"><div class="t" style="left:1px;top:1.5px;font-size:10px;color:#66747a">ID8698</div></div>
<div class="abs" style="left:54.0px;top:95.5px;width:38.0px;height:12.5px;background:#b6e6a2;overflow:hidden"><div class="t" style="left:1px;top:1.5px;font-size:10px;color:#66747a">ID2730</div></div>
<div class="abs" style="left:93.0px;top:95.5px;width:24.0px;height:12.5px;background:#b8d860;overflow:hidden"><div class="t" style="left:1px;top:1.5px;font-size:10px;color:#66747a">ID</div></div>
<div class="abs" style="left:118.0px;top:95.5px;width:12.0px;height:12.5px;background:#c9f7f7;overflow:hidden"><div class="t" style="left:1px;top:1.5px;font-size:10px;color:#66747a">ID</div></div>
<div class="abs" style="left:131.0px;top:95.5px;width:24.5px;height:12.5px;background:#3fe24a;overflow:hidden"><div class="t" style="left:1px;top:1.5px;font-size:10px;color:#66747a">ID990</div></div>
<div class="abs" style="left:156.0px;top:95.5px;width:12.5px;height:12.5px;background:#d8d45c;overflow:hidden"><div class="t" style="left:1px;top:1.5px;font-size:10px;color:#66747a">ID</div></div>
<div class="abs" style="left:16.0px;top:109.0px;width:11.5px;height:12.5px;background:#a9c0cc;overflow:hidden"><div class="t" style="left:1px;top:1.5px;font-size:10px;color:#66747a">ID</div></div>
<div class="abs" style="left:28.5px;top:109.0px;width:12.0px;height:12.5px;background:#d8d45c;overflow:hidden"><div class="t" style="left:1px;top:1.5px;font-size:10px;color:#66747a">ID</div></div>
<div class="abs" style="left:41.5px;top:109.0px;width:11.5px;height:12.5px;background:#e08560;overflow:hidden"><div class="t" style="left:1px;top:1.5px;font-size:10px;color:#66747a">ID</div></div>
<div class="abs" style="left:54.0px;top:109.0px;width:12.0px;height:12.5px;background:#b9dce8;overflow:hidden"><div class="t" style="left:1px;top:1.5px;font-size:10px;color:#66747a">ID</div></div>
<div class="abs" style="left:67.0px;top:109.0px;width:12.0px;height:12.5px;background:#b8d860;overflow:hidden"><div class="t" style="left:1px;top:1.5px;font-size:10px;color:#66747a">ID</div></div>
<div class="abs" style="left:80.0px;top:109.0px;width:11.5px;height:12.5px;background:#c9f7f7;overflow:hidden"><div class="t" style="left:1px;top:1.5px;font-size:10px;color:#66747a">ID</div></div>
<div class="abs" style="left:92.5px;top:109.0px;width:11.5px;height:12.5px;background:#d59a80;overflow:hidden"><div class="t" style="left:1px;top:1.5px;font-size:10px;color:#66747a">ID</div></div>
<div class="abs" style="left:105.0px;top:109.0px;width:12.0px;height:12.5px;background:#d8d45c;overflow:hidden"><div class="t" style="left:1px;top:1.5px;font-size:10px;color:#66747a">ID</div></div>
<div class="abs" style="left:118.0px;top:109.0px;width:12.0px;height:12.5px;background:#d8d45c;overflow:hidden"><div class="t" style="left:1px;top:1.5px;font-size:10px;color:#66747a">ID</div></div>
<div class="abs" style="left:131.0px;top:109.0px;width:24.5px;height:12.5px;background:#3fe24a;overflow:hidden"><div class="t" style="left:1px;top:1.5px;font-size:10px;color:#66747a">ID4</div></div>
<div class="abs" style="left:28.5px;top:122.5px;width:12.0px;height:12.5px;background:#e08560;overflow:hidden"><div class="t" style="left:1px;top:1.5px;font-size:10px;color:#66747a">ID</div></div>
<div class="abs" style="left:54.0px;top:122.5px;width:12.0px;height:12.5px;background:#d59a80;overflow:hidden"><div class="t" style="left:1px;top:1.5px;font-size:10px;color:#66747a">ID</div></div>
<div class="abs" style="left:131.0px;top:122.5px;width:24.5px;height:12.5px;background:#3fe24a;overflow:hidden"><div class="t" style="left:1px;top:1.5px;font-size:10px;color:#66747a">ID66</div></div>
<div class="abs" style="left:131.0px;top:136.0px;width:24.5px;height:12.5px;background:#d8d45c;overflow:hidden"><div class="t" style="left:1px;top:1.5px;font-size:10px;color:#66747a">ID76</div></div>
<div class="abs" style="left:131.0px;top:149.5px;width:11.0px;height:12.5px;background:#3fe24a;overflow:hidden"><div class="t" style="left:1px;top:1.5px;font-size:10px;color:#66747a">ID</div></div>
<div class="abs" style="left:143.0px;top:149.5px;width:12.5px;height:12.5px;background:#b9dce8;overflow:hidden"><div class="t" style="left:1px;top:1.5px;font-size:10px;color:#66747a">ID</div></div>
</div>
<div class="abs" style="left:1133px;top:309px;width:14px;height:158px;background:#f2f2f2"></div>
<div class="abs" style="left:1134px;top:323px;width:10px;height:14px;background:#a8a8a8"></div>
<svg style="left:1134px;top:314px" width="10" height="6" viewBox="0 0 10 6"><path d="M2 5 L5 1.5 L8 5 Z" fill="#777"/></svg>
<svg style="left:1134px;top:455px" width="10" height="6" viewBox="0 0 10 6"><path d="M2 1 L5 4.5 L8 1 Z" fill="#334"/></svg>
<div class="abs" style="left:270px;top:467px;width:877px;height:13px;background:#ececec"></div>
<div class="abs" style="left:493px;top:468px;width:418px;height:10px;background:#b0b0b0"></div>
<svg style="left:274px;top:469px" width="6" height="9" viewBox="0 0 6 9"><path d="M5 1 L1.5 4.5 L5 8 Z" fill="#334"/></svg>
<svg style="left:1123px;top:469px" width="6" height="9" viewBox="0 0 6 9"><path d="M1 1 L4.5 4.5 L1 8 Z" fill="#334"/></svg>
<div class="abs" style="left:207px;top:490px;width:940px;height:240px;background:#fcfcfc;border:1px solid #dedede;box-shadow:0 0 0 1px #ececec;border-radius:3px"></div>
<div class="abs" style="left:207px;top:490px;width:940px;height:32px;background:#e6e6e6;border-radius:3px 3px 0 0"></div>
<div class="t" style="left:219.5px;top:498.5px;font-size:14px;color:#6c6c6c">Resource Usage by Skill [hours]</div>
<div class="t" style="left:219.5px;top:543px;font-size:12px;color:#777">Resource</div>
<div class="abs" style="left:275px;top:538px;width:165px;height:23px;background:#fff;border:1px solid #d6d6d6;border-radius:3px"></div>
<div class="t" style="left:284px;top:544px;font-size:12px;color:#aaa">All</div>
<svg style="left:422px;top:547px" width="10" height="6" viewBox="0 0 10 6"><path d="M1 1 L5 5 L9 1 Z" fill="#888"/></svg>
<svg style="left:1062px;top:565px" width="60" height="18" viewBox="0 0 60 18"><g fill="none" stroke="#666" stroke-width="1.2">
<path d="M2.5 5 H6 M4 3 V15 H14 V5 H9"/>
<path d="M26 5 H33.5 V15 H24 V8 M24 5 L26.5 3 M24 5 L26.5 7"/>
<path d="M48.5 2 V12 M44.5 8 L48.5 12 L52.5 8 M43.5 12 V15 H54 V12"/>
</g></svg>
<div class="abs" style="left:307px;top:609.2px;width:739px;height:1px;background:#dedede"></div>
<div class="abs" style="left:304px;top:609.2px;width:4px;height:1px;background:#666"></div>
<div class="t" style="left:240px;width:61px;text-align:right;top:604.2px;font-size:10px;color:#666">2,500</div>
<div class="abs" style="left:307px;top:629.3px;width:739px;height:1px;background:#dedede"></div>
<div class="abs" style="left:304px;top:629.3px;width:4px;height:1px;background:#666"></div>
<div class="t" style="left:240px;width:61px;text-align:right;top:624.3px;font-size:10px;color:#666">2,000</div>
<div class="abs" style="left:307px;top:649.4px;width:739px;height:1px;background:#dedede"></div>
<div class="abs" style="left:304px;top:649.4px;width:4px;height:1px;background:#666"></div>
<div class="t" style="left:240px;width:61px;text-align:right;top:644.4px;font-size:10px;color:#666">1,500</div>
<div class="abs" style="left:307px;top:669.4px;width:739px;height:1px;background:#dedede"></div>
<div class="abs" style="left:304px;top:669.4px;width:4px;height:1px;background:#666"></div>
<div class="t" style="left:240px;width:61px;text-align:right;top:664.4px;font-size:10px;color:#666">1,000</div>
<div class="abs" style="left:307px;top:689.5px;width:739px;height:1px;background:#dedede"></div>
<div class="abs" style="left:304px;top:689.5px;width:4px;height:1px;background:#666"></div>
<div class="t" style="left:240px;width:61px;text-align:right;top:684.5px;font-size:10px;color:#666">500</div>
<div class="t" style="left:240px;width:61px;text-align:right;top:704.6px;font-size:10px;color:#666">0</div>
<div class="abs" style="left:307px;top:609px;width:1px;height:103px;background:#777"></div>
<div class="abs" style="left:307px;top:710.1px;width:739px;height:1px;background:#777"></div>
<div class="abs" style="left:308.00px;top:691.72px;width:9px;height:0.63px;background:#9ae6a6;"></div>
<div class="abs" style="left:308.00px;top:692.35px;width:9px;height:0.79px;background:#bf58c6;"></div>
<div class="abs" style="left:308.00px;top:693.14px;width:9px;height:4.41px;background:#d8d45a;"></div>
<div class="abs" style="left:308.00px;top:697.55px;width:9px;height:4.72px;background:#878b96;"></div>
<div class="abs" style="left:308.00px;top:702.27px;width:9px;height:4.25px;background:#d3d3d3;"></div>
<div class="abs" style="left:308.00px;top:706.51px;width:9px;height:2.83px;background:#40e04a;"></div>
<div class="abs" style="left:308.00px;top:709.35px;width:9px;height:0.75px;background:#e0865e;"></div>
<div class="abs" style="left:318.86px;top:620.45px;width:9px;height:3.15px;background:#9ae6a6;"></div>
<div class="abs" style="left:318.86px;top:623.60px;width:9px;height:6.61px;background:#bf58c6;"></div>
<div class="abs" style="left:318.86px;top:630.21px;width:9px;height:20.93px;background:#d8d45a;"></div>
<div class="abs" style="left:318.86px;top:651.13px;width:9px;height:23.60px;background:#878b96;"></div>
<div class="abs" style="left:318.86px;top:674.73px;width:9px;height:17.78px;background:#d3d3d3;"></div>
<div class="abs" style="left:318.86px;top:692.51px;width:9px;height:10.07px;background:#40e04a;"></div>
<div class="abs" style="left:318.86px;top:702.58px;width:9px;height:7.52px;background:#e0865e;border-top:1px solid #f4f4f4;"></div>
<div class="abs" style="left:329.72px;top:624.86px;width:9px;height:3.15px;background:#9ae6a6;"></div>
<div class="abs" style="left:329.72px;top:628.01px;width:9px;height:6.29px;background:#bf58c6;"></div>
<div class="abs" style="left:329.72px;top:634.30px;width:9px;height:17.31px;background:#d8d45a;"></div>
<div class="abs" style="left:329.72px;top:651.60px;width:9px;height:21.08px;background:#878b96;"></div>
<div class="abs" style="left:329.72px;top:672.69px;width:9px;height:17.78px;background:#d3d3d3;"></div>
<div class="abs" style="left:329.72px;top:690.47px;width:9px;height:10.23px;background:#40e04a;"></div>
<div class="abs" style="left:329.72px;top:700.69px;width:9px;height:9.41px;background:#e0865e;border-top:1px solid #f4f4f4;"></div>
<div class="abs" style="left:340.58px;top:627.06px;width:9px;height:2.83px;background:#9ae6a6;"></div>
<div class="abs" style="left:340.58px;top:629.89px;width:9px;height:6.61px;background:#bf58c6;"></div>
<div class="abs" style="left:340.58px;top:636.50px;width:9px;height:15.42px;background:#d8d45a;"></div>
<div class="abs" style="left:340.58px;top:651.92px;width:9px;height:19.67px;background:#878b96;"></div>
<div class="abs" style="left:340.58px;top:671.59px;width:9px;height:18.09px;background:#d3d3d3;"></div>
<div class="abs" style="left:340.58px;top:689.68px;width:9px;height:10.23px;background:#40e04a;"></div>
<div class="abs" style="left:340.58px;top:699.91px;width:9px;height:10.19px;background:#e0865e;border-top:1px solid #f4f4f4;"></div>
<div class="abs" style="left:351.44px;top:631.15px;width:9px;height:2.67px;background:#9ae6a6;"></div>
<div class="abs" style="left:351.44px;top:633.83px;width:9px;height:6.77px;background:#bf58c6;"></div>
<div class="abs" style="left:351.44px;top:640.59px;width:9px;height:14.16px;background:#d8d45a;"></div>
<div class="abs" style="left:351.44px;top:654.75px;width:9px;height:17.31px;background:#878b96;"></div>
<div class="abs" style="left:351.44px;top:672.06px;width:9px;height:18.41px;background:#d3d3d3;"></div>
<div class="abs" style="left:351.44px;top:690.47px;width:9px;height:10.23px;background:#40e04a;"></div>
<div class="abs" style="left:351.44px;top:700.69px;width:9px;height:9.41px;background:#e0865e;border-top:1px solid #f4f4f4;"></div>
<div class="abs" style="left:362.30px;top:633.35px;width:9px;height:2.83px;background:#9ae6a6;"></div>
<div class="abs" style="left:362.30px;top:636.19px;width:9px;height:7.08px;background:#bf58c6;"></div>
<div class="abs" style="left:362.30px;top:643.27px;width:9px;height:13.69px;background:#d8d45a;"></div>
<div class="abs" style="left:362.30px;top:656.95px;width:9px;height:15.73px;background:#878b96;"></div>
<div class="abs" style="left:362.30px;top:672.69px;width:9px;height:16.99px;background:#d3d3d3;"></div>
<div class="abs" style="left:362.30px;top:689.68px;width:9px;height:10.23px;background:#40e04a;"></div>
<div class="abs" style="left:362.30px;top:699.91px;width:9px;height:10.19px;background:#e0865e;border-top:1px solid #f4f4f4;"></div>
<div class="abs" style="left:373.16px;top:633.35px;width:9px;height:2.83px;background:#9ae6a6;"></div>
<div class="abs" style="left:373.16px;top:636.19px;width:9px;height:7.08px;background:#bf58c6;"></div>
<div class="abs" style="left:373.16px;top:643.27px;width:9px;height:12.59px;background:#d8d45a;"></div>
<div class="abs" style="left:373.16px;top:655.85px;width:9px;height:16.83px;background:#878b96;"></div>
<div class="abs" style="left:373.16px;top:672.69px;width:9px;height:19.82px;background:#d3d3d3;"></div>
<div class="abs" style="left:373.16px;top:692.51px;width:9px;height:8.18px;background:#40e04a;"></div>
<div class="abs" style="left:373.16px;top:700.69px;width:9px;height:9.41px;background:#e0865e;border-top:1px solid #f4f4f4;"></div>
<div class="abs" style="left:384.02px;top:639.33px;width:9px;height:1.89px;background:#9ae6a6;"></div>
<div class="abs" style="left:384.02px;top:641.22px;width:9px;height:6.77px;background:#bf58c6;"></div>
<div class="abs" style="left:384.02px;top:647.99px;width:9px;height:11.80px;background:#d8d45a;"></div>
<div class="abs" style="left:384.02px;top:659.79px;width:9px;height:16.99px;background:#878b96;"></div>
<div class="abs" style="left:384.02px;top:676.78px;width:9px;height:19.19px;background:#d3d3d3;"></div>
<div class="abs" style="left:384.02px;top:695.97px;width:9px;height:5.03px;background:#40e04a;"></div>
<div class="abs" style="left:384.02px;top:701.01px;width:9px;height:9.09px;background:#e0865e;border-top:1px solid #f4f4f4;"></div>
<div class="abs" style="left:394.88px;top:642.16px;width:9px;height:1.89px;background:#9ae6a6;"></div>
<div class="abs" style="left:394.88px;top:644.05px;width:9px;height:5.51px;background:#bf58c6;"></div>
<div class="abs" style="left:394.88px;top:649.56px;width:9px;height:11.49px;background:#d8d45a;"></div>
<div class="abs" style="left:394.88px;top:661.04px;width:9px;height:16.36px;background:#878b96;"></div>
<div class="abs" style="left:394.88px;top:677.41px;width:9px;height:18.25px;background:#d3d3d3;"></div>
<div class="abs" style="left:394.88px;top:695.66px;width:9px;height:5.35px;background:#40e04a;"></div>
<div class="abs" style="left:394.88px;top:701.01px;width:9px;height:9.09px;background:#e0865e;border-top:1px solid #f4f4f4;"></div>
<div class="abs" style="left:405.74px;top:642.79px;width:9px;height:2.05px;background:#9ae6a6;"></div>
<div class="abs" style="left:405.74px;top:644.84px;width:9px;height:5.82px;background:#bf58c6;"></div>
<div class="abs" style="left:405.74px;top:650.66px;width:9px;height:10.38px;background:#d8d45a;"></div>
<div class="abs" style="left:405.74px;top:661.04px;width:9px;height:15.73px;background:#878b96;"></div>
<div class="abs" style="left:405.74px;top:676.78px;width:9px;height:18.41px;background:#d3d3d3;"></div>
<div class="abs" style="left:405.74px;top:695.19px;width:9px;height:5.82px;background:#40e04a;"></div>
<div class="abs" style="left:405.74px;top:701.01px;width:9px;height:9.09px;background:#e0865e;border-top:1px solid #f4f4f4;"></div>
<div class="abs" style="left:416.60px;top:644.05px;width:9px;height:1.89px;background:#9ae6a6;"></div>
<div class="abs" style="left:416.60px;top:645.94px;width:9px;height:5.19px;background:#bf58c6;"></div>
<div class="abs" style="left:416.60px;top:651.13px;width:9px;height:10.23px;background:#d8d45a;"></div>
<div class="abs" style="left:416.60px;top:661.36px;width:9px;height:15.42px;background:#878b96;"></div>
<div class="abs" style="left:416.60px;top:676.78px;width:9px;height:17.62px;background:#d3d3d3;"></div>
<div class="abs" style="left:416.60px;top:694.40px;width:9px;height:5.98px;background:#40e04a;"></div>
<div class="abs" style="left:416.60px;top:700.38px;width:9px;height:9.72px;background:#e0865e;border-top:1px solid #f4f4f4;"></div>
<div class="abs" style="left:427.46px;top:642.48px;width:9px;height:1.57px;background:#9ae6a6;"></div>
<div class="abs" style="left:427.46px;top:644.05px;width:9px;height:7.08px;background:#bf58c6;"></div>
<div class="abs" style="left:427.46px;top:651.13px;width:9px;height:9.91px;background:#d8d45a;"></div>
<div class="abs" style="left:427.46px;top:661.04px;width:9px;height:15.73px;background:#878b96;"></div>
<div class="abs" style="left:427.46px;top:676.78px;width:9px;height:16.05px;background:#d3d3d3;"></div>
<div class="abs" style="left:427.46px;top:692.83px;width:9px;height:5.51px;background:#40e04a;"></div>
<div class="abs" style="left:427.46px;top:698.33px;width:9px;height:11.77px;background:#e0865e;border-top:1px solid #f4f4f4;"></div>
<div class="abs" style="left:438.32px;top:644.37px;width:9px;height:2.05px;background:#9ae6a6;"></div>
<div class="abs" style="left:438.32px;top:646.41px;width:9px;height:6.29px;background:#bf58c6;"></div>
<div class="abs" style="left:438.32px;top:652.71px;width:9px;height:9.44px;background:#d8d45a;"></div>
<div class="abs" style="left:438.32px;top:662.15px;width:9px;height:15.73px;background:#878b96;"></div>
<div class="abs" style="left:438.32px;top:677.88px;width:9px;height:16.52px;background:#d3d3d3;"></div>
<div class="abs" style="left:438.32px;top:694.40px;width:9px;height:5.03px;background:#40e04a;"></div>
<div class="abs" style="left:438.32px;top:699.43px;width:9px;height:10.67px;background:#e0865e;border-top:1px solid #f4f4f4;"></div>
<div class="abs" style="left:449.18px;top:647.51px;width:9px;height:2.05px;background:#9ae6a6;"></div>
<div class="abs" style="left:449.18px;top:649.56px;width:9px;height:6.77px;background:#bf58c6;"></div>
<div class="abs" style="left:449.18px;top:656.32px;width:9px;height:8.50px;background:#d8d45a;"></div>
<div class="abs" style="left:449.18px;top:664.82px;width:9px;height:16.99px;background:#878b96;"></div>
<div class="abs" style="left:449.18px;top:681.81px;width:9px;height:16.99px;background:#d3d3d3;"></div>
<div class="abs" style="left:449.18px;top:698.80px;width:9px;height:3.78px;background:#40e04a;"></div>
<div class="abs" style="left:449.18px;top:702.58px;width:9px;height:7.52px;background:#e0865e;border-top:1px solid #f4f4f4;"></div>
<div class="abs" style="left:460.04px;top:647.51px;width:9px;height:2.05px;background:#9ae6a6;"></div>
<div class="abs" style="left:460.04px;top:649.56px;width:9px;height:7.39px;background:#bf58c6;"></div>
<div class="abs" style="left:460.04px;top:656.95px;width:9px;height:4.09px;background:#d8d45a;"></div>
<div class="abs" style="left:460.04px;top:661.04px;width:9px;height:21.55px;background:#878b96;"></div>
<div class="abs" style="left:460.04px;top:682.60px;width:9px;height:18.09px;background:#d3d3d3;"></div>
<div class="abs" style="left:460.04px;top:700.69px;width:9px;height:4.41px;background:#40e04a;"></div>
<div class="abs" style="left:460.04px;top:705.10px;width:9px;height:5.00px;background:#e0865e;border-top:1px solid #f4f4f4;"></div>
<div class="abs" style="left:470.90px;top:650.66px;width:9px;height:2.05px;background:#9ae6a6;"></div>
<div class="abs" style="left:470.90px;top:652.71px;width:9px;height:7.87px;background:#bf58c6;"></div>
<div class="abs" style="left:470.90px;top:660.57px;width:9px;height:2.36px;background:#d8d45a;"></div>
<div class="abs" style="left:470.90px;top:662.93px;width:9px;height:21.24px;background:#878b96;"></div>
<div class="abs" style="left:470.90px;top:684.17px;width:9px;height:16.52px;background:#d3d3d3;"></div>
<div class="abs" style="left:470.90px;top:700.69px;width:9px;height:4.41px;background:#40e04a;"></div>
<div class="abs" style="left:470.90px;top:705.10px;width:9px;height:5.00px;background:#e0865e;border-top:1px solid #f4f4f4;"></div>
<div class="abs" style="left:481.76px;top:656.95px;width:9px;height:1.57px;background:#9ae6a6;"></div>
<div class="abs" style="left:481.76px;top:658.53px;width:9px;height:2.05px;background:#bf58c6;"></div>
<div class="abs" style="left:481.76px;top:660.57px;width:9px;height:2.36px;background:#d8d45a;"></div>
<div class="abs" style="left:481.76px;top:662.93px;width:9px;height:22.03px;background:#878b96;"></div>
<div class="abs" style="left:481.76px;top:684.96px;width:9px;height:16.99px;background:#d3d3d3;"></div>
<div class="abs" style="left:481.76px;top:701.95px;width:9px;height:3.15px;background:#40e04a;"></div>
<div class="abs" style="left:481.76px;top:705.10px;width:9px;height:5.00px;background:#e0865e;border-top:1px solid #f4f4f4;"></div>
<div class="abs" style="left:492.62px;top:655.38px;width:9px;height:1.57px;background:#9ae6a6;"></div>
<div class="abs" style="left:492.62px;top:656.95px;width:9px;height:2.52px;background:#bf58c6;"></div>
<div class="abs" style="left:492.62px;top:659.47px;width:9px;height:2.67px;background:#d8d45a;"></div>
<div class="abs" style="left:492.62px;top:662.15px;width:9px;height:22.03px;background:#878b96;"></div>
<div class="abs" style="left:492.62px;top:684.17px;width:9px;height:18.41px;background:#d3d3d3;"></div>
<div class="abs" style="left:492.62px;top:702.58px;width:9px;height:3.15px;background:#40e04a;"></div>
<div class="abs" style="left:492.62px;top:705.73px;width:9px;height:4.37px;background:#e0865e;border-top:1px solid #f4f4f4;"></div>
<div class="abs" style="left:503.48px;top:644.37px;width:9px;height:2.05px;background:#9ae6a6;"></div>
<div class="abs" style="left:503.48px;top:646.41px;width:9px;height:7.08px;background:#bf58c6;"></div>
<div class="abs" style="left:503.48px;top:653.49px;width:9px;height:3.93px;background:#d8d45a;"></div>
<div class="abs" style="left:503.48px;top:657.43px;width:9px;height:22.81px;background:#878b96;"></div>
<div class="abs" style="left:503.48px;top:680.24px;width:9px;height:22.34px;background:#d3d3d3;"></div>
<div class="abs" style="left:503.48px;top:702.58px;width:9px;height:4.41px;background:#40e04a;"></div>
<div class="abs" style="left:503.48px;top:706.99px;width:9px;height:3.11px;background:#e0865e;border-top:1px solid #f4f4f4;"></div>
<div class="abs" style="left:514.34px;top:645.63px;width:9px;height:1.57px;background:#9ae6a6;"></div>
<div class="abs" style="left:514.34px;top:647.20px;width:9px;height:4.41px;background:#bf58c6;"></div>
<div class="abs" style="left:514.34px;top:651.60px;width:9px;height:6.61px;background:#d8d45a;"></div>
<div class="abs" style="left:514.34px;top:658.21px;width:9px;height:22.81px;background:#878b96;"></div>
<div class="abs" style="left:514.34px;top:681.03px;width:9px;height:21.55px;background:#d3d3d3;"></div>
<div class="abs" style="left:514.34px;top:702.58px;width:9px;height:4.41px;background:#40e04a;"></div>
<div class="abs" style="left:514.34px;top:706.99px;width:9px;height:3.11px;background:#e0865e;border-top:1px solid #f4f4f4;"></div>
<div class="abs" style="left:525.20px;top:653.49px;width:9px;height:1.57px;background:#9ae6a6;"></div>
<div class="abs" style="left:525.20px;top:655.07px;width:9px;height:4.41px;background:#bf58c6;"></div>
<div class="abs" style="left:525.20px;top:659.47px;width:9px;height:4.72px;background:#d8d45a;"></div>
<div class="abs" style="left:525.20px;top:664.19px;width:9px;height:18.41px;background:#878b96;"></div>
<div class="abs" style="left:525.20px;top:682.60px;width:9px;height:20.45px;background:#d3d3d3;"></div>
<div class="abs" style="left:525.20px;top:703.05px;width:9px;height:3.93px;background:#40e04a;"></div>
<div class="abs" style="left:525.20px;top:706.99px;width:9px;height:3.11px;background:#e0865e;border-top:1px solid #f4f4f4;"></div>
<div class="abs" style="left:536.06px;top:670.80px;width:9px;height:1.89px;background:#9ae6a6;"></div>
<div class="abs" style="left:536.06px;top:672.69px;width:9px;height:4.72px;background:#bf58c6;"></div>
<div class="abs" style="left:536.06px;top:677.41px;width:9px;height:1.26px;background:#d8d45a;"></div>
<div class="abs" style="left:536.06px;top:678.67px;width:9px;height:4.72px;background:#878b96;"></div>
<div class="abs" style="left:536.06px;top:683.39px;width:9px;height:19.67px;background:#d3d3d3;"></div>
<div class="abs" style="left:536.06px;top:703.05px;width:9px;height:3.93px;background:#40e04a;"></div>
<div class="abs" style="left:536.06px;top:706.99px;width:9px;height:3.11px;background:#e0865e;border-top:1px solid #f4f4f4;"></div>
<div class="abs" style="left:546.92px;top:673.16px;width:9px;height:1.57px;background:#9ae6a6;"></div>
<div class="abs" style="left:546.92px;top:674.73px;width:9px;height:2.36px;background:#bf58c6;"></div>
<div class="abs" style="left:546.92px;top:677.09px;width:9px;height:5.98px;background:#878b96;"></div>
<div class="abs" style="left:546.92px;top:683.07px;width:9px;height:19.51px;background:#d3d3d3;"></div>
<div class="abs" style="left:546.92px;top:702.58px;width:9px;height:4.41px;background:#40e04a;"></div>
<div class="abs" style="left:546.92px;top:706.99px;width:9px;height:3.11px;background:#e0865e;border-top:1px solid #f4f4f4;"></div>
<div class="abs" style="left:557.78px;top:675.83px;width:9px;height:1.57px;background:#9ae6a6;"></div>
<div class="abs" style="left:557.78px;top:677.41px;width:9px;height:1.26px;background:#bf58c6;"></div>
<div class="abs" style="left:557.78px;top:678.67px;width:9px;height:0.79px;background:#d8d45a;"></div>
<div class="abs" style="left:557.78px;top:679.45px;width:9px;height:5.51px;background:#878b96;"></div>
<div class="abs" style="left:557.78px;top:684.96px;width:9px;height:19.19px;background:#d3d3d3;"></div>
<div class="abs" style="left:557.78px;top:704.15px;width:9px;height:2.83px;background:#40e04a;"></div>
<div class="abs" style="left:557.78px;top:706.99px;width:9px;height:3.11px;background:#e0865e;border-top:1px solid #f4f4f4;"></div>
<div class="abs" style="left:568.64px;top:673.95px;width:9px;height:1.57px;background:#9ae6a6;"></div>
<div class="abs" style="left:568.64px;top:675.52px;width:9px;height:3.15px;background:#bf58c6;"></div>
<div class="abs" style="left:568.64px;top:678.67px;width:9px;height:5.51px;background:#878b96;"></div>
<div class="abs" style="left:568.64px;top:684.17px;width:9px;height:19.98px;background:#d3d3d3;"></div>
<div class="abs" style="left:568.64px;top:704.15px;width:9px;height:2.83px;background:#40e04a;"></div>
<div class="abs" style="left:568.64px;top:706.99px;width:9px;height:3.11px;background:#e0865e;border-top:1px solid #f4f4f4;"></div>
<div class="abs" style="left:579.50px;top:674.73px;width:9px;height:1.57px;background:#9ae6a6;"></div>
<div class="abs" style="left:579.50px;top:676.31px;width:9px;height:2.05px;background:#bf58c6;"></div>
<div class="abs" style="left:579.50px;top:678.35px;width:9px;height:5.35px;background:#878b96;"></div>
<div class="abs" style="left:579.50px;top:683.70px;width:9px;height:20.93px;background:#d3d3d3;"></div>
<div class="abs" style="left:579.50px;top:704.63px;width:9px;height:2.36px;background:#40e04a;"></div>
<div class="abs" style="left:579.50px;top:706.99px;width:9px;height:3.11px;background:#e0865e;border-top:1px solid #f4f4f4;"></div>
<div class="abs" style="left:590.36px;top:681.03px;width:9px;height:1.10px;background:#9ae6a6;"></div>
<div class="abs" style="left:590.36px;top:682.13px;width:9px;height:1.26px;background:#bf58c6;"></div>
<div class="abs" style="left:590.36px;top:683.39px;width:9px;height:5.51px;background:#878b96;"></div>
<div class="abs" style="left:590.36px;top:688.89px;width:9px;height:19.67px;background:#d3d3d3;"></div>
<div class="abs" style="left:590.36px;top:708.56px;width:9px;height:1.54px;background:#e0865e;"></div>
<div class="abs" style="left:601.22px;top:679.92px;width:9px;height:1.10px;background:#9ae6a6;"></div>
<div class="abs" style="left:601.22px;top:681.03px;width:9px;height:2.05px;background:#bf58c6;"></div>
<div class="abs" style="left:601.22px;top:683.07px;width:9px;height:4.25px;background:#878b96;"></div>
<div class="abs" style="left:601.22px;top:687.32px;width:9px;height:20.93px;background:#d3d3d3;"></div>
<div class="abs" style="left:601.22px;top:708.24px;width:9px;height:1.86px;background:#e0865e;"></div>
<div class="abs" style="left:612.08px;top:682.13px;width:9px;height:1.26px;background:#9ae6a6;"></div>
<div class="abs" style="left:612.08px;top:683.39px;width:9px;height:1.57px;background:#bf58c6;"></div>
<div class="abs" style="left:612.08px;top:684.96px;width:9px;height:5.98px;background:#878b96;"></div>
<div class="abs" style="left:612.08px;top:690.94px;width:9px;height:16.83px;background:#d3d3d3;"></div>
<div class="abs" style="left:612.08px;top:707.77px;width:9px;height:2.33px;background:#e0865e;"></div>
<div class="abs" style="left:622.94px;top:688.42px;width:9px;height:0.94px;background:#9ae6a6;"></div>
<div class="abs" style="left:622.94px;top:689.36px;width:9px;height:1.89px;background:#bf58c6;"></div>
<div class="abs" style="left:622.94px;top:691.25px;width:9px;height:5.51px;background:#878b96;"></div>
<div class="abs" style="left:622.94px;top:696.76px;width:9px;height:11.80px;background:#d3d3d3;"></div>
<div class="abs" style="left:622.94px;top:708.56px;width:9px;height:1.54px;background:#e0865e;"></div>
<div class="abs" style="left:633.80px;top:689.68px;width:9px;height:0.79px;background:#9ae6a6;"></div>
<div class="abs" style="left:633.80px;top:690.47px;width:9px;height:2.36px;background:#bf58c6;"></div>
<div class="abs" style="left:633.80px;top:692.83px;width:9px;height:7.87px;background:#878b96;"></div>
<div class="abs" style="left:633.80px;top:700.69px;width:9px;height:9.44px;background:#d3d3d3;"></div>
<div class="abs" style="left:644.66px;top:695.34px;width:9px;height:1.89px;background:#c97ab6;"></div>
<div class="abs" style="left:644.66px;top:697.23px;width:9px;height:5.82px;background:#878b96;"></div>
<div class="abs" style="left:644.66px;top:703.05px;width:9px;height:7.08px;background:#d3d3d3;"></div>
<div class="abs" style="left:655.52px;top:695.98px;width:9px;height:2.01px;background:#c97ab6;"></div>
<div class="abs" style="left:655.52px;top:697.99px;width:9px;height:5.10px;background:#878b96;"></div>
<div class="abs" style="left:655.52px;top:703.09px;width:9px;height:7.01px;background:#d3d3d3;"></div>
<div class="abs" style="left:666.38px;top:697.21px;width:9px;height:1.55px;background:#c97ab6;"></div>
<div class="abs" style="left:666.38px;top:698.76px;width:9px;height:4.33px;background:#878b96;"></div>
<div class="abs" style="left:666.38px;top:703.09px;width:9px;height:7.01px;background:#d3d3d3;"></div>
<div class="abs" style="left:677.24px;top:698.76px;width:9px;height:1.86px;background:#c97ab6;"></div>
<div class="abs" style="left:677.24px;top:700.62px;width:9px;height:3.09px;background:#878b96;"></div>
<div class="abs" style="left:677.24px;top:703.71px;width:9px;height:6.39px;background:#d3d3d3;"></div>
<div class="abs" style="left:688.10px;top:699.07px;width:9px;height:1.55px;background:#c97ab6;"></div>
<div class="abs" style="left:688.10px;top:700.62px;width:9px;height:3.09px;background:#878b96;"></div>
<div class="abs" style="left:688.10px;top:703.71px;width:9px;height:6.39px;background:#d3d3d3;"></div>
<div class="abs" style="left:698.96px;top:700.00px;width:9px;height:1.55px;background:#c97ab6;"></div>
<div class="abs" style="left:698.96px;top:701.54px;width:9px;height:3.09px;background:#878b96;"></div>
<div class="abs" style="left:698.96px;top:704.64px;width:9px;height:5.46px;background:#d3d3d3;"></div>
<div class="abs" style="left:709.82px;top:700.00px;width:9px;height:1.55px;background:#c97ab6;"></div>
<div class="abs" style="left:709.82px;top:701.54px;width:9px;height:3.09px;background:#878b96;"></div>
<div class="abs" style="left:709.82px;top:704.64px;width:9px;height:5.46px;background:#d3d3d3;"></div>
<div class="abs" style="left:720.68px;top:700.00px;width:9px;height:1.55px;background:#c97ab6;"></div>
<div class="abs" style="left:720.68px;top:701.54px;width:9px;height:3.09px;background:#878b96;"></div>
<div class="abs" style="left:720.68px;top:704.64px;width:9px;height:5.46px;background:#d3d3d3;"></div>
<div class="abs" style="left:731.54px;top:700.31px;width:9px;height:1.55px;background:#c97ab6;"></div>
<div class="abs" style="left:731.54px;top:701.85px;width:9px;height:2.78px;background:#878b96;"></div>
<div class="abs" style="left:731.54px;top:704.64px;width:9px;height:5.46px;background:#d3d3d3;"></div>
<div class="abs" style="left:742.40px;top:698.76px;width:9px;height:1.86px;background:#c97ab6;"></div>
<div class="abs" style="left:742.40px;top:700.62px;width:9px;height:3.09px;background:#878b96;"></div>
<div class="abs" style="left:742.40px;top:703.71px;width:9px;height:6.39px;background:#d3d3d3;"></div>
<div class="abs" style="left:753.26px;top:689.48px;width:9px;height:1.55px;background:#c97ab6;"></div>
<div class="abs" style="left:753.26px;top:691.03px;width:9px;height:3.40px;background:#878b96;"></div>
<div class="abs" style="left:753.26px;top:694.43px;width:9px;height:15.67px;background:#d3d3d3;"></div>
<div class="abs" style="left:764.12px;top:689.79px;width:9px;height:1.55px;background:#c97ab6;"></div>
<div class="abs" style="left:764.12px;top:691.34px;width:9px;height:3.56px;background:#878b96;"></div>
<div class="abs" style="left:764.12px;top:694.89px;width:9px;height:15.21px;background:#d3d3d3;"></div>
<div class="abs" style="left:774.98px;top:694.89px;width:9px;height:1.55px;background:#c97ab6;"></div>
<div class="abs" style="left:774.98px;top:696.44px;width:9px;height:3.56px;background:#878b96;"></div>
<div class="abs" style="left:774.98px;top:700.00px;width:9px;height:10.10px;background:#d3d3d3;"></div>
<div class="abs" style="left:785.84px;top:694.89px;width:9px;height:1.55px;background:#c97ab6;"></div>
<div class="abs" style="left:785.84px;top:696.44px;width:9px;height:3.87px;background:#878b96;"></div>
<div class="abs" style="left:785.84px;top:700.31px;width:9px;height:9.79px;background:#d3d3d3;"></div>
<div class="abs" style="left:796.70px;top:698.76px;width:9px;height:1.55px;background:#c97ab6;"></div>
<div class="abs" style="left:796.70px;top:700.31px;width:9px;height:3.87px;background:#878b96;"></div>
<div class="abs" style="left:796.70px;top:704.17px;width:9px;height:5.93px;background:#d3d3d3;"></div>
<div class="abs" style="left:807.56px;top:697.52px;width:9px;height:1.55px;background:#c97ab6;"></div>
<div class="abs" style="left:807.56px;top:699.07px;width:9px;height:3.56px;background:#878b96;"></div>
<div class="abs" style="left:807.56px;top:702.63px;width:9px;height:7.47px;background:#d3d3d3;"></div>
<div class="abs" style="left:818.42px;top:697.99px;width:9px;height:1.55px;background:#c97ab6;"></div>
<div class="abs" style="left:818.42px;top:699.53px;width:9px;height:3.56px;background:#878b96;"></div>
<div class="abs" style="left:818.42px;top:703.09px;width:9px;height:7.01px;background:#d3d3d3;"></div>
<div class="abs" style="left:829.28px;top:699.07px;width:9px;height:1.55px;background:#c97ab6;"></div>
<div class="abs" style="left:829.28px;top:700.62px;width:9px;height:3.56px;background:#878b96;"></div>
<div class="abs" style="left:829.28px;top:704.17px;width:9px;height:5.93px;background:#d3d3d3;"></div>
<div class="abs" style="left:840.14px;top:700.00px;width:9px;height:1.55px;background:#c97ab6;"></div>
<div class="abs" style="left:840.14px;top:701.54px;width:9px;height:3.40px;background:#878b96;"></div>
<div class="abs" style="left:840.14px;top:704.95px;width:9px;height:5.15px;background:#d3d3d3;"></div>
<div class="abs" style="left:851.00px;top:700.00px;width:9px;height:1.55px;background:#c97ab6;"></div>
<div class="abs" style="left:851.00px;top:701.54px;width:9px;height:3.71px;background:#878b96;"></div>
<div class="abs" style="left:851.00px;top:705.25px;width:9px;height:4.85px;background:#d3d3d3;"></div>
<div class="abs" style="left:861.86px;top:700.00px;width:9px;height:1.55px;background:#c97ab6;"></div>
<div class="abs" style="left:861.86px;top:701.54px;width:9px;height:3.40px;background:#878b96;"></div>
<div class="abs" style="left:861.86px;top:704.95px;width:9px;height:5.15px;background:#d3d3d3;"></div>
<div class="abs" style="left:872.72px;top:702.63px;width:9px;height:1.55px;background:#c97ab6;"></div>
<div class="abs" style="left:872.72px;top:704.17px;width:9px;height:2.63px;background:#878b96;"></div>
<div class="abs" style="left:872.72px;top:706.80px;width:9px;height:3.30px;background:#d3d3d3;"></div>
<div class="abs" style="left:883.58px;top:703.09px;width:9px;height:1.55px;background:#c97ab6;"></div>
<div class="abs" style="left:883.58px;top:704.64px;width:9px;height:3.09px;background:#878b96;"></div>
<div class="abs" style="left:883.58px;top:707.73px;width:9px;height:2.37px;background:#d3d3d3;"></div>
<div class="abs" style="left:894.44px;top:703.09px;width:9px;height:1.55px;background:#c97ab6;"></div>
<div class="abs" style="left:894.44px;top:704.64px;width:9px;height:3.09px;background:#878b96;"></div>
<div class="abs" style="left:894.44px;top:707.73px;width:9px;height:2.37px;background:#d3d3d3;"></div>
<div class="abs" style="left:905.30px;top:703.09px;width:9px;height:1.55px;background:#c97ab6;"></div>
<div class="abs" style="left:905.30px;top:704.64px;width:9px;height:3.09px;background:#878b96;"></div>
<div class="abs" style="left:905.30px;top:707.73px;width:9px;height:2.37px;background:#d3d3d3;"></div>
<div class="abs" style="left:916.16px;top:703.40px;width:9px;height:1.55px;background:#c97ab6;"></div>
<div class="abs" style="left:916.16px;top:704.95px;width:9px;height:3.09px;background:#878b96;"></div>
<div class="abs" style="left:916.16px;top:708.04px;width:9px;height:2.06px;background:#d3d3d3;"></div>
<div class="abs" style="left:927.02px;top:703.71px;width:9px;height:1.55px;background:#c97ab6;"></div>
<div class="abs" style="left:927.02px;top:705.25px;width:9px;height:3.09px;background:#878b96;"></div>
<div class="abs" style="left:927.02px;top:708.35px;width:9px;height:1.75px;background:#d3d3d3;"></div>
<div class="abs" style="left:937.88px;top:703.71px;width:9px;height:1.55px;background:#c97ab6;"></div>
<div class="abs" style="left:937.88px;top:705.25px;width:9px;height:3.09px;background:#878b96;"></div>
<div class="abs" style="left:937.88px;top:708.35px;width:9px;height:1.75px;background:#d3d3d3;"></div>
<div class="abs" style="left:948.74px;top:704.17px;width:9px;height:1.55px;background:#c97ab6;"></div>
<div class="abs" style="left:948.74px;top:705.72px;width:9px;height:3.09px;background:#878b96;"></div>
<div class="abs" style="left:948.74px;top:708.81px;width:9px;height:1.29px;background:#d3d3d3;"></div>
<div class="abs" style="left:959.60px;top:705.25px;width:9px;height:1.55px;background:#c97ab6;"></div>
<div class="abs" style="left:959.60px;top:706.80px;width:9px;height:2.47px;background:#878b96;"></div>
<div class="abs" style="left:959.60px;top:709.27px;width:9px;height:0.83px;background:#d3d3d3;"></div>
<div class="abs" style="left:970.46px;top:705.25px;width:9px;height:1.55px;background:#c97ab6;"></div>
<div class="abs" style="left:970.46px;top:706.80px;width:9px;height:2.47px;background:#878b96;"></div>
<div class="abs" style="left:970.46px;top:709.27px;width:9px;height:0.83px;background:#d3d3d3;"></div>
<div class="abs" style="left:981.32px;top:705.25px;width:9px;height:1.55px;background:#c97ab6;"></div>
<div class="abs" style="left:981.32px;top:706.80px;width:9px;height:2.47px;background:#878b96;"></div>
<div class="abs" style="left:981.32px;top:709.27px;width:9px;height:0.83px;background:#d3d3d3;"></div>
<div class="abs" style="left:992.18px;top:705.15px;width:9px;height:1.65px;background:#c97ab6;"></div>
<div class="abs" style="left:992.18px;top:706.80px;width:9px;height:3.30px;background:#878b96;"></div>
<div class="abs" style="left:1003.04px;top:705.46px;width:9px;height:1.55px;background:#c97ab6;"></div>
<div class="abs" style="left:1003.04px;top:707.01px;width:9px;height:3.09px;background:#878b96;"></div>
<div class="abs" style="left:1013.90px;top:707.53px;width:9px;height:1.03px;background:#c97ab6;"></div>
<div class="abs" style="left:1013.90px;top:708.56px;width:9px;height:1.54px;background:#878b96;"></div>
<div class="abs" style="left:1024.76px;top:708.25px;width:9px;height:0.82px;background:#c97ab6;"></div>
<div class="abs" style="left:1024.76px;top:709.07px;width:9px;height:1.03px;background:#878b96;"></div>
<div class="abs" style="left:1035.62px;top:708.56px;width:9px;height:0.72px;background:#c97ab6;"></div>
<div class="abs" style="left:1035.62px;top:709.28px;width:9px;height:0.82px;background:#878b96;"></div>
</body></html>
